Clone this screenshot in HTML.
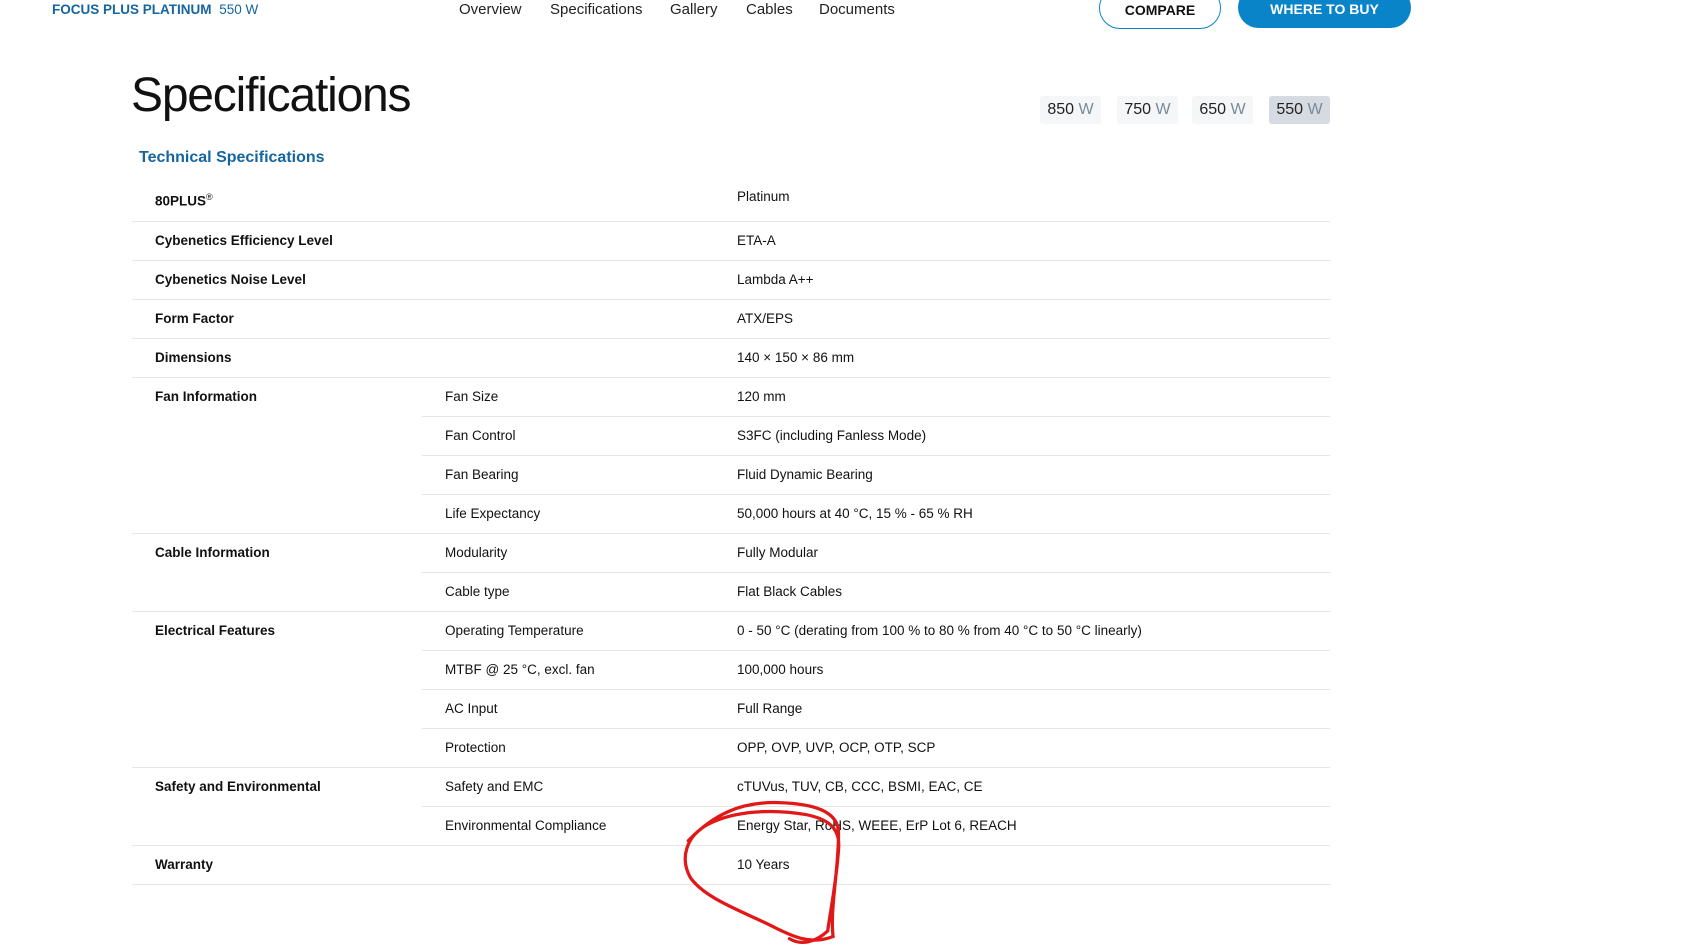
<!DOCTYPE html>
<html><head><meta charset="utf-8"><style>
*{margin:0;padding:0;box-sizing:border-box}
body{width:1699px;height:946px;background:#fff;font-family:"Liberation Sans",sans-serif;color:#111;position:relative;overflow:hidden}
.a{position:absolute;white-space:nowrap}
.nav{font-size:15px;color:#222;top:1px}
.line{position:absolute;height:1px;background:#e6e6e6}
.t{position:absolute;font-size:13.5px;color:#111;white-space:nowrap}
.b{font-weight:bold}
.w{position:absolute;top:96px;height:28px;width:61px;background:#f5f6f8;border-radius:3px;font-size:16px;text-align:center;line-height:28px;color:#222}
.w span{color:#7a8a99}
</style></head><body>
<div class="a" style="left:52px;top:2px;font-size:13.5px;color:#1565a0;font-weight:bold">FOCUS PLUS PLATINUM <span style="font-weight:normal;margin-left:4px">550 W</span></div>
<div class="a nav" style="left:459px">Overview</div>
<div class="a nav" style="left:550px">Specifications</div>
<div class="a nav" style="left:670px">Gallery</div>
<div class="a nav" style="left:746px">Cables</div>
<div class="a nav" style="left:819px">Documents</div>
<div class="a" style="left:1099px;top:-13px;width:122px;height:42px;border:1px solid #0a84c8;border-radius:21px;text-align:center;padding-top:14px;font-size:14px;font-weight:bold;color:#111">COMPARE</div>
<div class="a" style="left:1238px;top:-13px;width:173px;height:41px;background:#0a84c8;border-radius:21px;text-align:center;padding-top:14px;font-size:14px;font-weight:bold;color:#fff">WHERE TO BUY</div>
<div class="a" style="left:131px;top:68px;font-size:48px;letter-spacing:-1.2px;color:#111">Specifications</div>
<div class="w" style="left:1040px">850 <span>W</span></div>
<div class="w" style="left:1117px">750 <span>W</span></div>
<div class="w" style="left:1192px">650 <span>W</span></div>
<div class="w" style="left:1269px;background:#d5dbe1">550 <span>W</span></div>
<div class="a" style="left:139px;top:149px;font-size:16px;color:#1565a0;font-weight:bold">Technical Specifications</div>
<div class="t b" style="left:155px;top:192px">80PLUS<sup style="font-size:9px;font-weight:normal">®</sup></div>
<div class="t" style="left:737px;top:189px">Platinum</div>
<div class="line" style="left:132px;width:1198px;top:221px"></div>
<div id="rows"></div>
<svg class="a" style="left:0;top:0" width="1699" height="946"><g transform="scale(1.089)"><path d="M632 772 C655 748 680 736 715 737 C748 738 770 745 770 765 C770 800 762 835 765 860 C745 868 728 860 712 852 C685 838 648 826 634 806 C624 788 630 768 650 757 C675 744 710 743 740 748 C760 752 772 760 770 780 C768 810 762 840 760 855 C748 866 735 868 725 862" fill="none" stroke="#e01818" stroke-width="3" stroke-linecap="round"/></g></svg>
<script>
var R=[["Cybenetics Efficiency Level","","ETA-A",1],["Cybenetics Noise Level","","Lambda A++",1],["Form Factor","","ATX/EPS",1],["Dimensions","","140 × 150 × 86 mm",1],
["Fan Information","Fan Size","120 mm",0],["","Fan Control","S3FC (including Fanless Mode)",0],["","Fan Bearing","Fluid Dynamic Bearing",0],["","Life Expectancy","50,000 hours at 40 °C, 15 % - 65 % RH",1],
["Cable Information","Modularity","Fully Modular",0],["","Cable type","Flat Black Cables",1],
["Electrical Features","Operating Temperature","0 - 50 °C (derating from 100 % to 80 % from 40 °C to 50 °C linearly)",0],["","MTBF @ 25 °C, excl. fan","100,000 hours",0],["","AC Input","Full Range",0],["","Protection","OPP, OVP, UVP, OCP, OTP, SCP",1],
["Safety and Environmental","Safety and EMC","cTUVus, TUV, CB, CCC, BSMI, EAC, CE",0],["","Environmental Compliance","Energy Star, RoHS, WEEE, ErP Lot 6, REACH",1],["Warranty","","10 Years",1]];
var h="";R.forEach(function(r,i){var y=221+39*i;var ty=y+12;
h+='<div class="t b" style="left:155px;top:'+ty+'px">'+r[0]+'</div><div class="t" style="left:445px;top:'+ty+'px">'+r[1]+'</div><div class="t" style="left:737px;top:'+ty+'px">'+r[2]+'</div>';
var l=r[3]?132:422;h+='<div class="line" style="left:'+l+'px;width:'+(1330-l)+'px;top:'+(y+39)+'px"></div>';});
document.getElementById("rows").innerHTML=h;
</script>
</body></html>
